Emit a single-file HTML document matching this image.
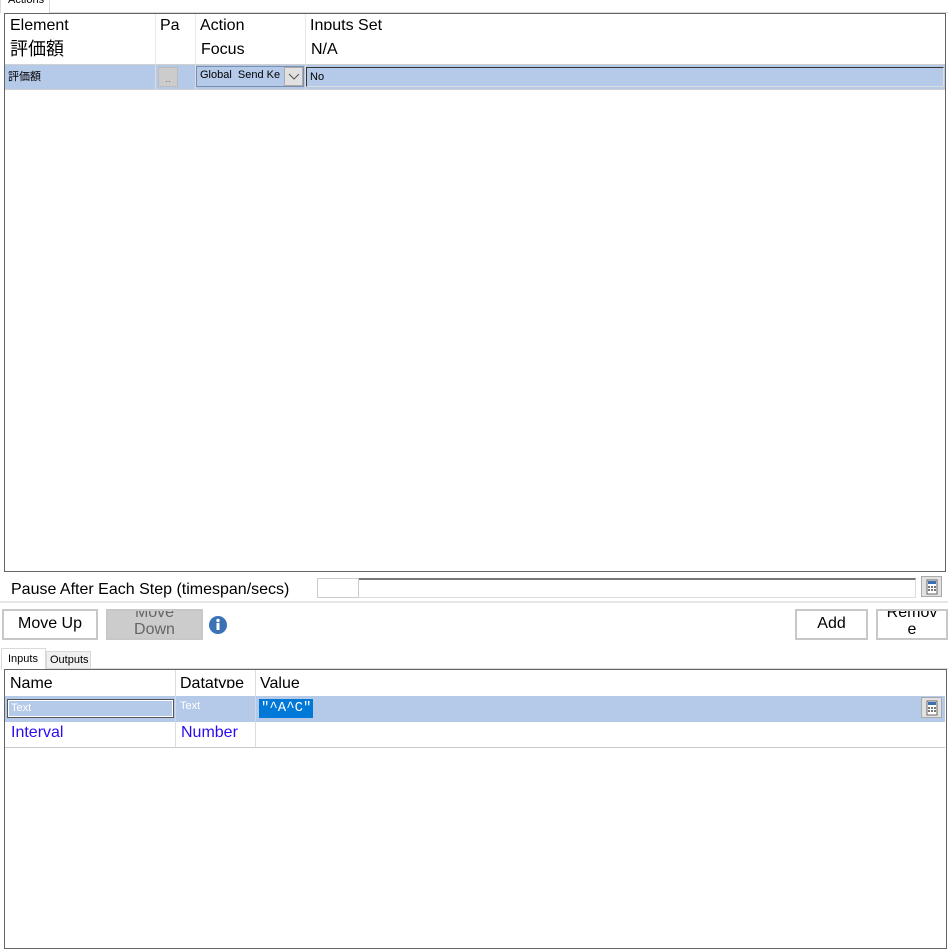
<!DOCTYPE html>
<html><head><meta charset="utf-8"><style>
*{margin:0;padding:0;box-sizing:border-box}
body{width:948px;height:921px;background:#fff;position:relative;overflow:hidden;font-family:"Liberation Sans","Noto Sans CJK JP",sans-serif;color:#000}
.a{position:absolute}
.clip{overflow:hidden;white-space:nowrap}
.btn{position:absolute;border:2px solid #c8c8c8;background:#fff;font-size:16px;text-align:center;line-height:26px;overflow:hidden}
.calc{position:absolute;width:21px;height:21px;border:1px solid #aaa;background:#e1e1e1}
</style></head><body>
<div class="a" style="left:0;top:0;width:50px;height:13px;border:1px solid #d9d9d9;border-top:none;border-bottom:none;background:#fff"></div>
<div class="a clip" style="left:8px;top:-6px;font-size:11px;height:13px;line-height:13px;">Actions</div>
<div class="a" style="left:50px;top:12px;width:898px;height:1px;background:#d9d9d9"></div>
<div class="a" style="left:4px;top:13px;width:942px;height:559px;border:1px solid #646464;background:#fff"></div>
<div class="a clip" style="left:5px;top:14px;width:940px;height:16px;">
 <div class="a" style="left:5px;top:3px;font-size:16px">Element</div>
 <div class="a" style="left:155px;top:3px;font-size:16px">Pa</div>
 <div class="a" style="left:195px;top:3px;font-size:16px">Action</div>
 <div class="a" style="left:305px;top:3px;font-size:16px">Inputs Set</div>
</div>
<div class="a" style="left:155px;top:14px;width:1px;height:50px;background:#e8e8e8"></div>
<div class="a" style="left:195px;top:14px;width:1px;height:50px;background:#e8e8e8"></div>
<div class="a" style="left:305px;top:14px;width:1px;height:50px;background:#e8e8e8"></div>
<div class="a" style="left:10px;top:38px;font-size:18px;line-height:22px">評価額</div>
<div class="a" style="left:201px;top:41px;font-size:16px">Focus</div>
<div class="a" style="left:311px;top:41px;font-size:16px">N/A</div>
<div class="a" style="left:5px;top:64px;width:940px;height:26px;background:#b5c9e8;border-top:1px solid #d0d0d0;border-bottom:1px solid #d0d0d0"></div>
<div class="a" style="left:155px;top:64px;width:1px;height:26px;background:#ddd"></div>
<div class="a" style="left:195px;top:64px;width:1px;height:26px;background:#ddd"></div>
<div class="a" style="left:305px;top:64px;width:1px;height:26px;background:#ddd"></div>
<div class="a" style="left:8px;top:68px;font-size:11px">評価額</div>
<div class="a" style="left:158px;top:67px;width:20px;height:20px;background:#ccc;border:1px solid #bbb;font-size:9px;text-align:center;line-height:22px;color:#666">..</div>
<div class="a clip" style="left:196px;top:66px;width:108px;height:21px;border:1px solid #7a8fb0;background:#b5c9e8;font-size:11px;line-height:16px;padding-left:3px">Global&nbsp; Send Ke</div>
<div class="a" style="left:284px;top:67px;width:19px;height:19px;background:#e1e1e1;border:1px solid #aaa"></div>
<svg class="a" style="left:286px;top:70px" width="16" height="12"><path d="M3 4 L8 9 L13 4" fill="none" stroke="#555" stroke-width="1"/></svg>
<div class="a" style="left:306px;top:67px;width:638px;height:20px;background:#b5c9e8;border:1px solid #333;border-right-color:#ddd;border-bottom-color:#ddd;font-size:11px;line-height:19px;padding-left:3px">No</div>
<div class="a" style="left:11px;top:581px;font-size:16px">Pause After Each Step (timespan/secs)</div>
<div class="a" style="left:317px;top:578px;width:599px;height:20px;border:1px solid #ddd;border-top:2px solid #777;background:#fff"></div>
<div class="a" style="left:317px;top:578px;width:42px;height:20px;border:1px solid #ccc;background:#fff"></div>
<div class="calc" style="left:921px;top:576px"><svg width="19" height="19"><rect x="5" y="3" width="10" height="14" fill="#fff" stroke="#666"/><rect x="6" y="4" width="8" height="3" fill="#3b6fb0"/><g fill="#777"><rect x="6" y="9" width="2" height="2"/><rect x="9" y="9" width="2" height="2"/><rect x="12" y="9" width="2" height="2"/><rect x="6" y="12" width="2" height="2"/><rect x="9" y="12" width="2" height="2"/><rect x="12" y="12" width="2" height="2"/></g></svg></div>
<div class="a" style="left:0;top:601px;width:948px;height:2px;background:#e6e6e6"></div>
<div class="btn" style="left:2px;top:609px;width:96px;height:31px">Move Up</div>
<div class="btn" style="left:106px;top:609px;width:97px;height:31px;background:#ccc;color:#666;line-height:17px"><div style="margin-top:-7px">Move<br>Down</div></div>
<svg class="a" style="left:208px;top:615px" width="20" height="20"><circle cx="10" cy="10" r="9" fill="#3b72b5"/><rect x="8.5" y="8" width="3" height="7" fill="#fff"/><circle cx="10" cy="5.5" r="1.7" fill="#fff"/></svg>
<div class="btn" style="left:795px;top:609px;width:73px;height:31px">Add</div>
<div class="btn" style="left:876px;top:609px;width:72px;height:31px;line-height:17px"><div style="margin-top:-7px">Remov<br>e</div></div>
<div class="a" style="left:1px;top:648px;width:45px;height:22px;border:1px solid #d9d9d9;border-bottom:none;background:#fff;font-size:11px;padding:4px 0 0 6px">Inputs</div>
<div class="a" style="left:46px;top:651px;width:45px;height:18px;border:1px solid #d9d9d9;background:#f0f0f0;font-size:11px;padding:2px 0 0 3px">Outputs</div>
<div class="a" style="left:91px;top:668px;width:857px;height:1px;background:#d9d9d9"></div>
<div class="a" style="left:4px;top:669px;width:943px;height:280px;border:1px solid #646464;background:#fff"></div>
<div class="a clip" style="left:5px;top:670px;width:940px;height:18px">
 <div class="a" style="left:5px;top:5px;font-size:16px">Name</div>
 <div class="a" style="left:175px;top:5px;font-size:16px">Datatype</div>
 <div class="a" style="left:255px;top:5px;font-size:16px">Value</div>
</div>
<div class="a" style="left:175px;top:670px;width:1px;height:78px;background:#ddd"></div>
<div class="a" style="left:255px;top:670px;width:1px;height:78px;background:#ddd"></div>
<div class="a" style="left:5px;top:696px;width:940px;height:26px;background:#b5c9e8"></div>
<div class="a" style="left:175px;top:696px;width:1px;height:26px;background:#cfd9ea"></div>
<div class="a" style="left:255px;top:696px;width:1px;height:26px;background:#cfd9ea"></div>
<div class="a" style="left:7px;top:699px;width:167px;height:19px;border:1px solid #555;outline:1px solid #fff;outline-offset:-2px;font-size:11px;color:#fff;line-height:17px;padding-left:3px">Text</div>
<div class="a" style="left:180px;top:700px;font-size:11px;color:#fff">Text</div>
<div class="a" style="left:259px;top:699px;width:54px;height:19px;background:#0078d7;color:#fff;font-family:'Liberation Mono',monospace;font-size:14px;line-height:19px;padding-left:2px">"^A^C"</div>
<div class="calc" style="left:921px;top:697px"><svg width="19" height="19"><rect x="5" y="3" width="10" height="14" fill="#fff" stroke="#666"/><rect x="6" y="4" width="8" height="3" fill="#3b6fb0"/><g fill="#777"><rect x="6" y="9" width="2" height="2"/><rect x="9" y="9" width="2" height="2"/><rect x="12" y="9" width="2" height="2"/><rect x="6" y="12" width="2" height="2"/><rect x="9" y="12" width="2" height="2"/><rect x="12" y="12" width="2" height="2"/></g></svg></div>
<div class="a" style="left:11px;top:724px;font-size:16px;color:#2a0cf0">Interval</div>
<div class="a" style="left:181px;top:724px;font-size:16px;color:#2a0cf0">Number</div>
<div class="a" style="left:5px;top:747px;width:940px;height:1px;background:#c8c8c8"></div>
</body></html>
